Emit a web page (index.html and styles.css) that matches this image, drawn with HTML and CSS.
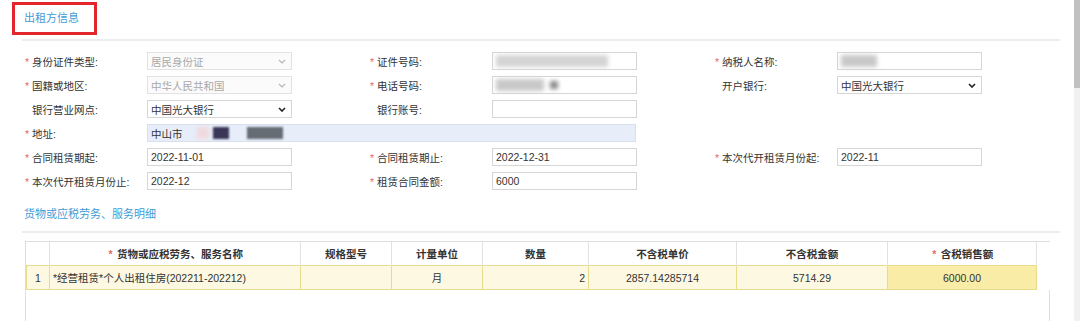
FILE: index.html
```html
<!DOCTYPE html>
<html>
<head>
 <meta charset="utf-8">
 <title>出租方信息</title>
 <link rel="stylesheet" href="styles.css">
</head>
<body>
<div class="page">
 <div class="main">
  <div class="sec-title mark">出租方信息</div>
  <div class="sec-line"></div>

  <div class="form">
   <div class="item">
    <label><i class="star">*</i>身份证件类型:</label>
    <div class="box sel dis"><span>居民身份证</span><svg class="chev" width="8" height="5" viewBox="0 0 8 5"><path d="M1 1L4 4L7 1" /></svg></div>
   </div>
   <div class="item">
    <label><i class="star">*</i>证件号码:</label>
    <div class="box"><span class="smudge s-id"></span></div>
   </div>
   <div class="item">
    <label><i class="star">*</i>纳税人名称:</label>
    <div class="box"><span class="smudge s-name"></span></div>
   </div>

   <div class="item">
    <label><i class="star">*</i>国籍或地区:</label>
    <div class="box sel dis"><span>中华人民共和国</span><svg class="chev" width="8" height="5" viewBox="0 0 8 5"><path d="M1 1L4 4L7 1" /></svg></div>
   </div>
   <div class="item">
    <label><i class="star">*</i>电话号码:</label>
    <div class="box"><span class="smudge s-tel"></span><span class="smudge s-tel2"></span></div>
   </div>
   <div class="item">
    <label><i class="star"></i>开户银行:</label>
    <div class="box sel"><span>中国光大银行</span><svg class="chev" width="8" height="5" viewBox="0 0 8 5"><path d="M1 1L4 4L7 1" /></svg></div>
   </div>

   <div class="item">
    <label><i class="star"></i>银行营业网点:</label>
    <div class="box sel"><span>中国光大银行</span><svg class="chev" width="8" height="5" viewBox="0 0 8 5"><path d="M1 1L4 4L7 1" /></svg></div>
   </div>
   <div class="item">
    <label><i class="star"></i>银行账号:</label>
    <div class="box"></div>
   </div>
   <div class="item"></div>

   <div class="item wide">
    <label><i class="star">*</i>地址:</label>
    <div class="box addr"><span>中山市</span><span class="smudge a-pink"></span><span class="smudge a-navy"></span><span class="smudge a-gray"></span></div>
   </div>
   <div class="item"></div>

   <div class="item">
    <label><i class="star">*</i>合同租赁期起:</label>
    <div class="box">2022-11-01</div>
   </div>
   <div class="item">
    <label><i class="star">*</i>合同租赁期止:</label>
    <div class="box">2022-12-31</div>
   </div>
   <div class="item">
    <label><i class="star">*</i>本次代开租赁月份起:</label>
    <div class="box">2022-11</div>
   </div>

   <div class="item">
    <label><i class="star">*</i>本次代开租赁月份止:</label>
    <div class="box">2022-12</div>
   </div>
   <div class="item">
    <label><i class="star">*</i>租赁合同金额:</label>
    <div class="box">6000</div>
   </div>
   <div class="item"></div>
  </div>

  <div class="sec-title sub">货物或应税劳务、服务明细</div>
  <div class="sec-line"></div>

  <div class="grid-wrap">
   <table class="grid">
    <colgroup>
     <col style="width:23px"><col style="width:251px"><col style="width:91px"><col style="width:91px">
     <col style="width:106px"><col style="width:148px"><col style="width:151px"><col style="width:149px"><col style="width:15px">
    </colgroup>
    <tr class="head">
     <th></th>
     <th><i class="star">*</i> 货物或应税劳务、服务名称</th>
     <th>规格型号</th>
     <th>计量单位</th>
     <th>数量</th>
     <th>不含税单价</th>
     <th>不含税金额</th>
     <th><i class="star">*</i> 含税销售额</th>
     <th></th>
    </tr>
    <tr class="row">
     <td class="c">1</td>
     <td class="l">*经营租赁*个人出租住房(202211-202212)</td>
     <td></td>
     <td class="c">月</td>
     <td class="r">2</td>
     <td class="c">2857.14285714</td>
     <td class="c">5714.29</td>
     <td class="c hot">6000.00</td>
     <td class="blank"></td>
    </tr>
   </table>
  </div>
 </div>
 <div class="scroll"><div class="thumb"></div></div>
</div>
</body>
</html>
```

FILE: styles.css
```css
  body{margin:0;background:#fff;color:#333;font-family:"Liberation Sans","Noto Sans CJK SC",sans-serif;font-size:10.5px;}
  .page{display:flex;height:321px;overflow:hidden;}
  .main{flex:1;display:flex;flex-direction:column;min-width:0;}
  .scroll{width:6px;background:#f1f1f1;}
  .thumb{height:88px;background:#c1c1c1;}

  .sec-title{color:#3f9bd6;font-size:11px;}
  .mark{box-sizing:border-box;width:85px;height:33px;margin:2px 0 0 12px;border:3px solid #e3262b;padding-left:9px;line-height:27px;}
  .sub{margin:16px 0 0 24px;height:16px;line-height:16px;}
  .sec-line{margin:4px 0 0 22px;width:1038px;height:2px;background:#ececec;}
  .sub + .sec-line{margin-top:9px;}

  .form{display:grid;grid-template-columns:repeat(3,345px);row-gap:6px;margin:11px 0 0 25px;}
  .item{display:flex;align-items:center;height:18px;}
  .item.wide{grid-column:span 2;}
  .item label{flex:none;width:122px;white-space:nowrap;}
  .star{display:inline-block;width:7px;font-style:normal;color:#e36a6a;}

  .box{box-sizing:border-box;flex:none;width:145px;height:18px;border:1px solid #d6d6d6;background:#fff;
	padding:0 3px;display:flex;align-items:center;white-space:nowrap;}
  .sel{justify-content:space-between;padding-right:5px;}
  .chev{fill:none;stroke:#222;stroke-width:1.6;}
  .dis{background:#fbfbfb;border-color:#e2e2e2;color:#a8a8a8;}
  .dis .chev{stroke:#b5b5b5;stroke-width:1.1;}
  .addr{width:489px;background:#e8eef9;border-color:#d8dfee;}

  .smudge{display:inline-block;height:12px;filter:blur(2px);}
  .s-id{width:112px;background:#d4d4d4;}
  .s-name{width:36px;background:#c8c8c8;}
  .s-tel{width:48px;background:#c9c9c9;}
  .s-tel2{width:8px;margin-left:6px;background:#8a8a8a;height:8px;}
  .a-pink{width:12px;margin-left:14px;background:#f1d8de;}
  .a-navy{width:16px;margin-left:4px;background:#3b3658;filter:blur(1px);}
  .a-gray{width:36px;margin-left:18px;background:#666c74;filter:blur(1px);}

  .grid-wrap{flex:1;margin:8px 0 0 25px;width:1025px;border:1px solid #dedede;border-bottom:none;box-sizing:border-box;}
  .grid{border-collapse:collapse;table-layout:fixed;width:1024px;}
  .grid th,.grid td{padding:0 3px;white-space:nowrap;overflow:hidden;}
  .head th{height:23px;background:#fff;border-right:1px solid #e2e2e2;font-weight:bold;color:#333;text-align:center;}
  .head th:last-child{border-right:none;}
  .row td{height:23px;background:#fdf8e2;border:1px solid #e7dc8c;}
  .row td.hot{background:#f9eca6;}
  .row td.blank{background:#fff;border:none;border-left:1px solid #e7dc8c;}
  .row .c{text-align:center;}
  .row .l{text-align:left;}
  .row .r{text-align:right;}
```
